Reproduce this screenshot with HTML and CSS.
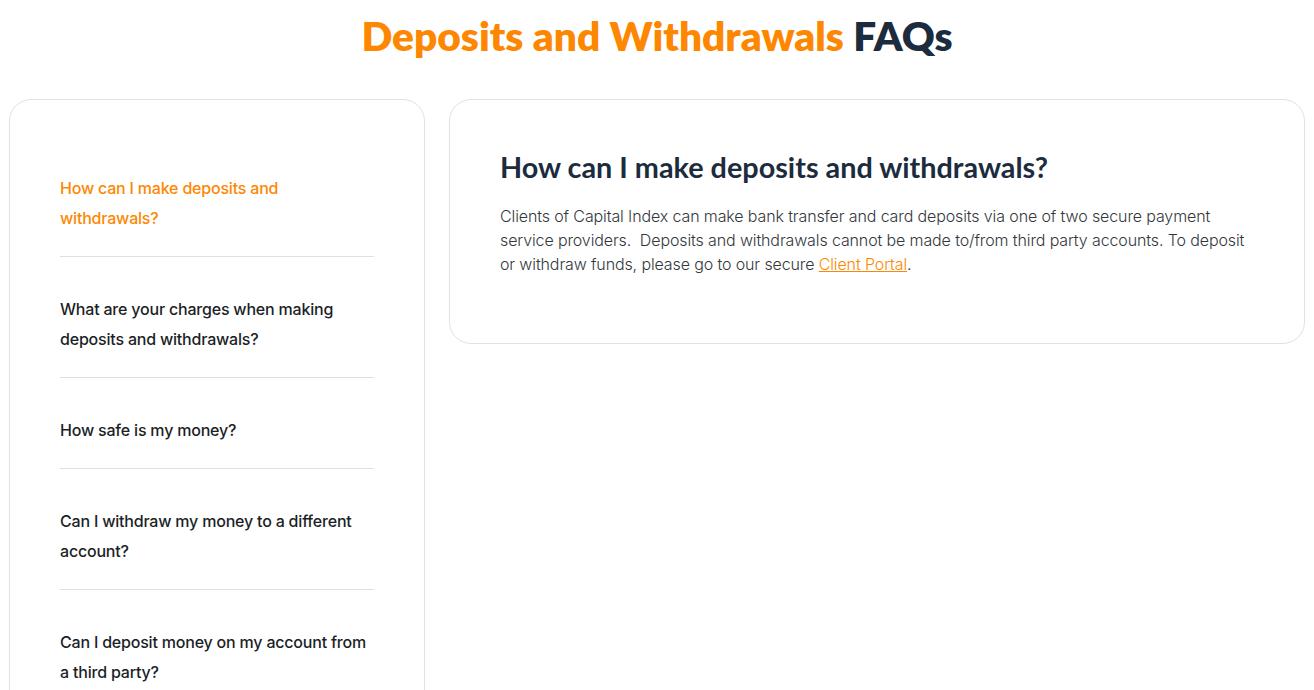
FILE: index.html
```html
<!DOCTYPE html>
<html lang="en">
<head>
<meta charset="utf-8">
<title>Deposits and Withdrawals FAQs</title>
<link rel="stylesheet" href="styles.css">
</head>
<body>
<main class="faq-page">
  <h1 class="faq-title"><span class="accent">Deposits and Withdrawals</span> FAQs</h1>
  <div class="faq-layout">
    <nav class="faq-list">
      <div class="faq-item active">How can I make deposits and withdrawals?</div>
      <div class="faq-item">What are your charges when making deposits and withdrawals?</div>
      <div class="faq-item">How safe is my money?</div>
      <div class="faq-item">Can I withdraw my money to a different account?</div>
      <div class="faq-item">Can I deposit money on my account from a third party?</div>
    </nav>
    <section class="faq-answer">
      <h2 class="answer-title">How can I make deposits and withdrawals?</h2>
      <p class="answer-text">Clients of Capital Index can make bank transfer and card deposits via one of two secure payment service providers.&nbsp; Deposits and withdrawals cannot be made to/from third party accounts. To deposit or withdraw funds, please go to our secure <a href="#" class="answer-link">Client Portal</a>.</p>
    </section>
  </div>
</main>
</body>
</html>
```

FILE: styles.css
```css
* { box-sizing: border-box; }
html, body { margin: 0; padding: 0; background: #ffffff; }
body { font-family: "Inter", "Liberation Sans", sans-serif; color: #1c1f26; overflow: hidden; height: 690px; }

.faq-page { padding: 0 9px 0 9px; }

.faq-title {
  margin: 0;
  padding-top: 12px;
  height: 99px;
  text-align: center;
  font-family: "Lato", "Inter", sans-serif;
  font-weight: 800;
  font-size: 40.6px;
  line-height: 48px;
  color: #1c2b3e;
}
.faq-title .accent { color: #fe8702; }

.faq-layout {
  display: grid;
  grid-template-columns: 416px 1fr;
  gap: 24px;
  align-items: start;
}

.faq-list {
  border: 1px solid #e2e2e2;
  border-radius: 22px;
  padding: 36px 50px 40px;
  min-height: 700px;
}

.faq-item {
  padding: 37px 0 23px;
  border-bottom: 1px solid #e0e0e0;
  font-size: 16px;
  line-height: 30px;
  font-weight: 500;
  letter-spacing: -0.2px;
  color: #1c1f26;
}
.faq-item.active { color: #fe8702; }

.faq-answer {
  border: 1px solid #e2e2e2;
  border-radius: 22px;
  padding: 50px 50px 50px;
}

.answer-title {
  margin: 0 0 20px;
  font-family: "Lato", "Inter", sans-serif;
  font-weight: 700;
  font-size: 28.8px;
  line-height: 34px;
  color: #1c2b3e;
}

.answer-text {
  margin: 0 0 17px;
  font-size: 16px;
  line-height: 24px;
  font-weight: 300;
  letter-spacing: -0.12px;
  color: #33373d;
}

.answer-link { color: #fe8702; text-decoration: underline; }
```
